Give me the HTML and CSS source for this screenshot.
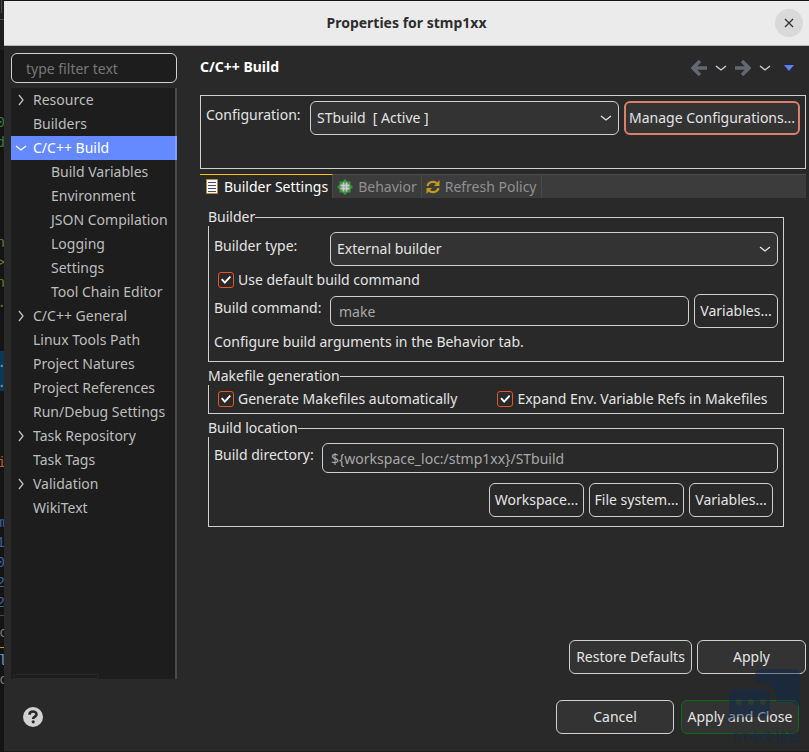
FILE: index.html
```
<!DOCTYPE html>
<html lang="en">
<head>
    <meta charset="UTF-8">
    <meta name="viewport" content="width=device-width, initial-scale=1.0">
    <title>Properties for stmp1xx</title>
    <link rel="stylesheet" href="styles.css">
</head>
<body>
    <!-- Edge of the editor behind the dialog -->
    <svg class="editor-edge" width="4" height="752" aria-hidden="true">
        <path fill="#1f1f1f" d="M0 0h4v50H0z"/>
        <path stroke="#4a4a4a" d="M1.5 0v13M0 19.5h4M0 615.5h4"/>
        <path fill="#0b3a57" d="M0 351h4v40H0z"/>
        <path stroke="#b39a1e" d="M0 647.5h4"/>
        <g text-anchor="end">
            <text x="5" y="127" fill="#3d7a3f">0</text>
            <text x="5" y="147" fill="#3d7a3f">d</text>
            <text x="5" y="247" fill="#5f7f35">n</text>
            <text x="5" y="267" fill="#5f7f35">&gt;</text>
            <text x="5" y="287" fill="#5f7f35">n</text>
            <text x="6" y="307" fill="#5f7f35">.</text>
            <text x="6" y="367" fill="#6f9fb5">.</text>
            <text x="6" y="387" fill="#6f9fb5">.</text>
            <text x="6" y="467" fill="#b5622d">i</text>
            <text x="5" y="527" fill="#3f62a0">m</text>
            <text x="5" y="547" fill="#3f62a0">1</text>
            <text x="5" y="567" fill="#3f62a0">0</text>
            <text x="5" y="587" fill="#3f62a0">2</text>
            <text x="5" y="607" fill="#3f62a0">2</text>
            <text x="8" y="637" fill="#777">c</text>
            <text x="7" y="665" fill="#6f9fcf">l</text>
            <text x="8" y="684" fill="#777">c</text>
        </g>
    </svg>

    <div class="dialog">
        <header class="titlebar">
            <h1>Properties for stmp1xx</h1>
            <button class="close" aria-label="Close">
                <svg width="10" height="10"><path d="M1 1l8 8M9 1l-8 8" stroke="#333" stroke-width="1.3"/></svg>
            </button>
        </header>

        <div class="body">
            <aside class="sidebar">
                <input class="field filter" type="text" placeholder="type filter text" aria-label="Filter">
                <nav class="tree">
                    <a href="#"><svg class="arrow" viewBox="0 0 12 12"><path d="M4 1l4 5-4 5"/></svg>Resource</a>
                    <a href="#">Builders</a>
                    <a href="#" class="selected"><svg class="arrow" viewBox="0 0 12 12"><path d="M1 4l5 4 5-4"/></svg>C/C++ Build</a>
                    <a href="#" class="child">Build Variables</a>
                    <a href="#" class="child">Environment</a>
                    <a href="#" class="child">JSON Compilation</a>
                    <a href="#" class="child">Logging</a>
                    <a href="#" class="child">Settings</a>
                    <a href="#" class="child">Tool Chain Editor</a>
                    <a href="#"><svg class="arrow" viewBox="0 0 12 12"><path d="M4 1l4 5-4 5"/></svg>C/C++ General</a>
                    <a href="#">Linux Tools Path</a>
                    <a href="#">Project Natures</a>
                    <a href="#">Project References</a>
                    <a href="#">Run/Debug Settings</a>
                    <a href="#"><svg class="arrow" viewBox="0 0 12 12"><path d="M4 1l4 5-4 5"/></svg>Task Repository</a>
                    <a href="#">Task Tags</a>
                    <a href="#"><svg class="arrow" viewBox="0 0 12 12"><path d="M4 1l4 5-4 5"/></svg>Validation</a>
                    <a href="#">WikiText</a>
                    <div class="scroll-thumb"></div>
                </nav>
            </aside>

            <main class="page">
                <div class="page-head">
                    <h2>C/C++ Build</h2>
                    <div class="history">
                        <button aria-label="Back"><svg width="16" height="16"><path d="M16 8H3M9 1L2 8l7 7" stroke="#646872" stroke-width="3.5" fill="none"/></svg></button>
                        <button aria-label="Back history"><svg width="12" height="8"><path d="M1 2l5 4 5-4" stroke="#d6d6d6" stroke-width="1.3" fill="none"/></svg></button>
                        <button aria-label="Forward"><svg width="16" height="16"><path d="M0 8h13M7 1l7 7-7 7" stroke="#646872" stroke-width="3.5" fill="none"/></svg></button>
                        <button aria-label="Forward history"><svg width="12" height="8"><path d="M1 2l5 4 5-4" stroke="#d6d6d6" stroke-width="1.3" fill="none"/></svg></button>
                        <button aria-label="Menu"><svg width="10" height="6"><path d="M0 0h10L5 6z" fill="#5b7dff"/></svg></button>
                    </div>
                </div>

                <div class="config">
                    <label for="configuration">Configuration:</label>
                    <span class="select">
                        <select id="configuration">
                            <option>STbuild&nbsp; [ Active ]</option>
                        </select>
                        <svg width="12" height="8"><path d="M1 2l5 4 5-4"/></svg>
                    </span>
                    <button class="btn focused">Manage Configurations...</button>
                </div>

                <div class="tabs" role="tablist">
                    <button class="tab active" role="tab" aria-selected="true">
                        <svg width="12" height="15"><path d="M.5.5h11v14H.5z" fill="#f4f8ff" stroke="#b98a3c"/><path d="M2 3.5h8M2 6.5h8M2 9.5h8M2 12.5h8" stroke="#4c4c5c"/></svg>
                        Builder Settings
                    </button>
                    <button class="tab" role="tab" aria-selected="false">
                        <svg width="16" height="16"><path d="M8 0l2.500 2.500h3v3L16 8l-2.500 2.500v3h-3L8 16l-2.500-2.500h-3v-3L0 8l2.500-2.500v-3h3z" fill="#38963f"/><path d="M6.500 3.500v9M9.500 3.500v9M3.500 6.500h9M3.500 9.500h9" stroke="#d2c4d2" stroke-width="1.800"/></svg>
                        Behavior
                    </button>
                    <button class="tab" role="tab" aria-selected="false">
                        <svg width="14" height="14"><path d="M1.500 6a5.500 5 0 0 1 9.500-2.500M12.500 8a5.500 5 0 0 1-9.500 2.500" fill="none" stroke="#c39a1b" stroke-width="2.200"/><path d="M13.500 0v6H8zM.5 14V8H6z" fill="#c39a1b"/></svg>
                        Refresh Policy
                    </button>
                </div>

                <form class="settings">
                    <fieldset>
                        <legend>Builder</legend>
                        <div class="row">
                            <label class="wide" for="type">Builder type:</label>
                            <span class="select">
                                <select id="type">
                                    <option>External builder</option>
                                </select>
                                <svg width="12" height="8"><path d="M1 2l5 4 5-4"/></svg>
                            </span>
                        </div>
                        <div class="checks">
                            <label><input type="checkbox" checked>Use default build command</label>
                        </div>
                        <div class="row">
                            <label class="wide" for="command">Build command:</label>
                            <input class="field" id="command" type="text" value="make">
                            <button type="button" class="btn">Variables...</button>
                        </div>
                        <p>Configure build arguments in the Behavior tab.</p>
                    </fieldset>

                    <fieldset class="compact">
                        <legend>Makefile generation</legend>
                        <div class="checks">
                            <label><input type="checkbox" checked>Generate Makefiles automatically</label>
                            <label><input type="checkbox" checked>Expand Env. Variable Refs in Makefiles</label>
                        </div>
                    </fieldset>

                    <fieldset>
                        <legend>Build location</legend>
                        <div class="row">
                            <label class="narrow" for="directory">Build directory:</label>
                            <input class="field" id="directory" type="text" value="${workspace_loc:/stmp1xx}/STbuild">
                        </div>
                        <div class="locations">
                            <button type="button" class="btn">Workspace...</button>
                            <button type="button" class="btn">File system...</button>
                            <button type="button" class="btn">Variables...</button>
                        </div>
                    </fieldset>
                </form>

                <div class="page-actions">
                    <button class="btn filled restore">Restore Defaults</button>
                    <button class="btn filled">Apply</button>
                </div>
            </main>
        </div>

        <footer class="footer">
            <button class="help" aria-label="Help">
                <svg width="20" height="20"><circle cx="10" cy="10" r="10" fill="#d2d2d2"/><path d="M6.500 7.800C6.500 3.500 13.500 3.500 13.500 7.500c0 2.200-3.300 2.200-3.300 4.500" fill="none" stroke="#292929" stroke-width="2.600"/><circle cx="10.200" cy="14.800" r="1.600" fill="#292929"/></svg>
            </button>
            <button class="btn filled">Cancel</button>
            <button class="btn filled default">Apply and Close</button>
        </footer>

        <svg class="watermark" width="72" height="76" aria-hidden="true">
            <path d="M26 14V6q0-6 6-6h33q6 0 6 6v32l-8-5H47V30Q46 15 32 14z"/>
            <path d="M0 54V27q0-7 7-7h27q7 0 7 7v14q0 7-7 7H8z"/>
            <g fill="#3a3a3a">
                <circle cx="10" cy="33" r="3"/>
                <circle cx="22" cy="33" r="3"/>
                <circle cx="34" cy="33" r="3"/>
            </g>
            <text x="3" y="73">ST中文论坛</text>
        </svg>
    </div>
</body>
</html>
```
FILE: styles.css
```
* {
    box-sizing: border-box;
}
body {
    margin: 0;
    display: flex;
    min-height: 100vh;
    background-color: #141414;
    color: #e4e4e4;
    font-family: "Noto Sans", "Open Sans", sans-serif;
    font-size: 14px;
    line-height: 20px;
}
button, input, select {
    font: inherit;
    color: inherit;
}
button {
    padding: 0;
    border: none;
    background: none;
}
.editor-edge {
    flex: none;
    overflow: hidden;
    font-family: "Liberation Mono", monospace;
    font-size: 14px;
}
.dialog {
    position: relative;
    flex: 1;
    min-width: 0;
    display: flex;
    flex-direction: column;
    background-color: #292929;
    border-top: 1px solid #17121f;
    border-bottom: 1px solid #1d1720;
}

/* Title bar */
.titlebar {
    display: grid;
    grid-template-columns: 28px 1fr 28px;
    align-items: center;
    height: 45px;
    padding: 0 6px;
    background-color: #ebebeb;
    border-bottom: 1px solid #b5b5b5;
    color: #2e2e2e;
}
.titlebar h1 {
    grid-column: 2;
    margin: 0;
    font-size: 14px;
    text-align: center;
}
.close {
    display: flex;
    align-items: center;
    justify-content: center;
    height: 28px;
    border-radius: 50%;
    background-color: #d9d9d9;
}

.body {
    flex: 1;
    display: flex;
    gap: 23px;
    padding: 7px 3px 0 7px;
}

/* Category tree */
.sidebar {
    width: 166px;
    display: flex;
    flex-direction: column;
    gap: 5px;
}
.field {
    flex: 1;
    min-width: 0;
    height: 30px;
    padding: 0 8px;
    background-color: #292929;
    border: 1px solid #cfcfcf;
    border-radius: 6px;
    color: #a8a8a8;
}
.filter {
    flex: none;
    padding: 0 14px;
    background-color: #1d1d1d;
}
.filter::placeholder {
    color: #777;
    opacity: 1;
}
.tree {
    flex: 1;
    display: flex;
    flex-direction: column;
    background-color: #1d1d1d;
    border-right: 2px solid #4b4b4b;
}
.tree a {
    display: flex;
    align-items: center;
    position: relative;
    height: 24px;
    padding-left: 22px;
    color: #bdbdbd;
    text-decoration: none;
    white-space: nowrap;
}
.tree .child {
    padding-left: 40px;
}
.tree .selected {
    margin-right: -2px;
    background-color: #658aff;
    border-right: 2px solid #819efb;
    color: #fff;
}
.arrow {
    position: absolute;
    left: 4px;
    width: 12px;
    height: 12px;
    fill: none;
    stroke: currentColor;
    stroke-width: 1.3;
}
.scroll-thumb {
    width: 86px;
    height: 5px;
    margin: auto 2px 0;
    border: 1px solid #2b2b2b;
    border-radius: 3px;
}

/* Settings page */
.page {
    flex: 1;
    min-width: 0;
    display: flex;
    flex-direction: column;
}
.page-head {
    display: flex;
    justify-content: space-between;
    align-items: center;
    height: 28px;
    margin-bottom: 14px;
    padding-right: 12px;
}
.page-head h2 {
    margin: 0;
    font-size: 14px;
    color: #fff;
}
.history {
    display: flex;
    align-items: center;
    gap: 8px;
    padding-top: 2px;
}
.history button {
    display: flex;
}
.history button:last-child {
    margin-left: 5px;
}
.config {
    display: flex;
    gap: 5px;
    height: 74px;
    padding: 5px;
    border: 1px solid #cfcfcf;
}
.config label {
    width: 99px;
    padding-top: 4px;
}
.select {
    flex: 1;
    min-width: 0;
    position: relative;
}
.select svg {
    position: absolute;
    top: 13px;
    right: 7px;
    fill: none;
    stroke: #e4e4e4;
    stroke-width: 1.3;
    pointer-events: none;
}
select {
    appearance: none;
    display: block;
    width: 100%;
    height: 34px;
    padding: 0 6px;
    background-color: #333;
    border: 1px solid #cfcfcf;
    border-radius: 6px;
}
.btn {
    min-width: 84px;
    height: 34px;
    padding: 0 4px;
    background-color: #292929;
    border: 1px solid #cfcfcf;
    border-radius: 6px;
    white-space: nowrap;
}
.row .btn, .locations .btn {
    padding: 0;
}
.filled {
    background-color: #333;
}
.focused {
    min-width: 176px;
    padding: 0 3px;
    background-color: #333;
    border: 2px solid #d98066;
}

.tabs {
    display: flex;
    height: 24px;
    margin-top: 5px;
    background-color: #3c3c3c;
    border-top: 1px solid #4d4d4d;
}
.tab {
    display: flex;
    align-items: center;
    gap: 5px;
    padding: 0 4px;
    border-right: 1px solid #4a4a4a;
    color: #909090;
    white-space: nowrap;
}
.tab.active {
    gap: 6px;
    margin-top: -1px;
    padding-left: 6px;
    background-color: #292929;
    border-top: 1px solid #fdbe12;
    color: #fff;
}

.settings {
    display: flex;
    flex-direction: column;
    gap: 5px;
    padding: 10px 22px 0 8px;
}
fieldset {
    min-width: 0;
    margin: 0;
    padding: 0 5px 9px;
    border: 1px solid #cfcfcf;
}
.compact {
    padding-bottom: 0;
}
legend {
    margin-left: -6px;
    padding: 0;
    background-color: #292929;
    line-height: 18px;
}
.row {
    display: flex;
    align-items: center;
    gap: 5px;
    margin-top: 6px;
}
.row label {
    padding-bottom: 6px;
    white-space: nowrap;
}
.row .btn {
    min-width: 84px;
}
.wide {
    width: 111px;
}
.narrow {
    width: 103px;
}
.checks {
    display: flex;
    gap: 40px;
    height: 28px;
    padding-left: 4px;
}
.checks label {
    display: flex;
    align-items: center;
    gap: 4px;
    white-space: nowrap;
}
.checks + .row {
    margin-top: 0;
}
input[type="checkbox"] {
    appearance: none;
    display: grid;
    place-items: center;
    width: 16px;
    height: 16px;
    margin: 0;
    border: 1px solid #e95420;
    border-radius: 3px;
}
input[type="checkbox"]:checked::before {
    content: "";
    width: 10px;
    height: 8px;
    background-color: #fff;
    clip-path: polygon(0 48%, 14% 32%, 38% 66%, 86% 0, 100% 16%, 38% 100%);
}
fieldset p {
    margin: 4px 0 0;
}
.locations {
    display: flex;
    justify-content: flex-end;
    gap: 5px;
    margin-top: 10px;
    padding-right: 5px;
}
.locations .btn {
    min-width: 95px;
}
.locations .btn:last-child {
    min-width: 84px;
}

.page-actions {
    display: flex;
    justify-content: flex-end;
    gap: 5px;
    margin-top: auto;
    padding-bottom: 5px;
}
.page-actions .btn {
    min-width: 109px;
}
.page-actions .restore {
    min-width: 123px;
}

.footer {
    display: flex;
    align-items: center;
    gap: 7px;
    padding: 21px 10px 17px 19px;
}
.footer .btn {
    min-width: 118px;
}
.footer .help {
    display: flex;
    margin-right: auto;
}
.footer .default {
    border-color: #0d6b16;
}

.watermark {
    position: absolute;
    right: 8px;
    bottom: 6px;
    fill: #0c2a52;
    opacity: 0.45;
    pointer-events: none;
    font: bold 13px "Liberation Sans", "Noto Sans CJK SC", sans-serif;
}
```
